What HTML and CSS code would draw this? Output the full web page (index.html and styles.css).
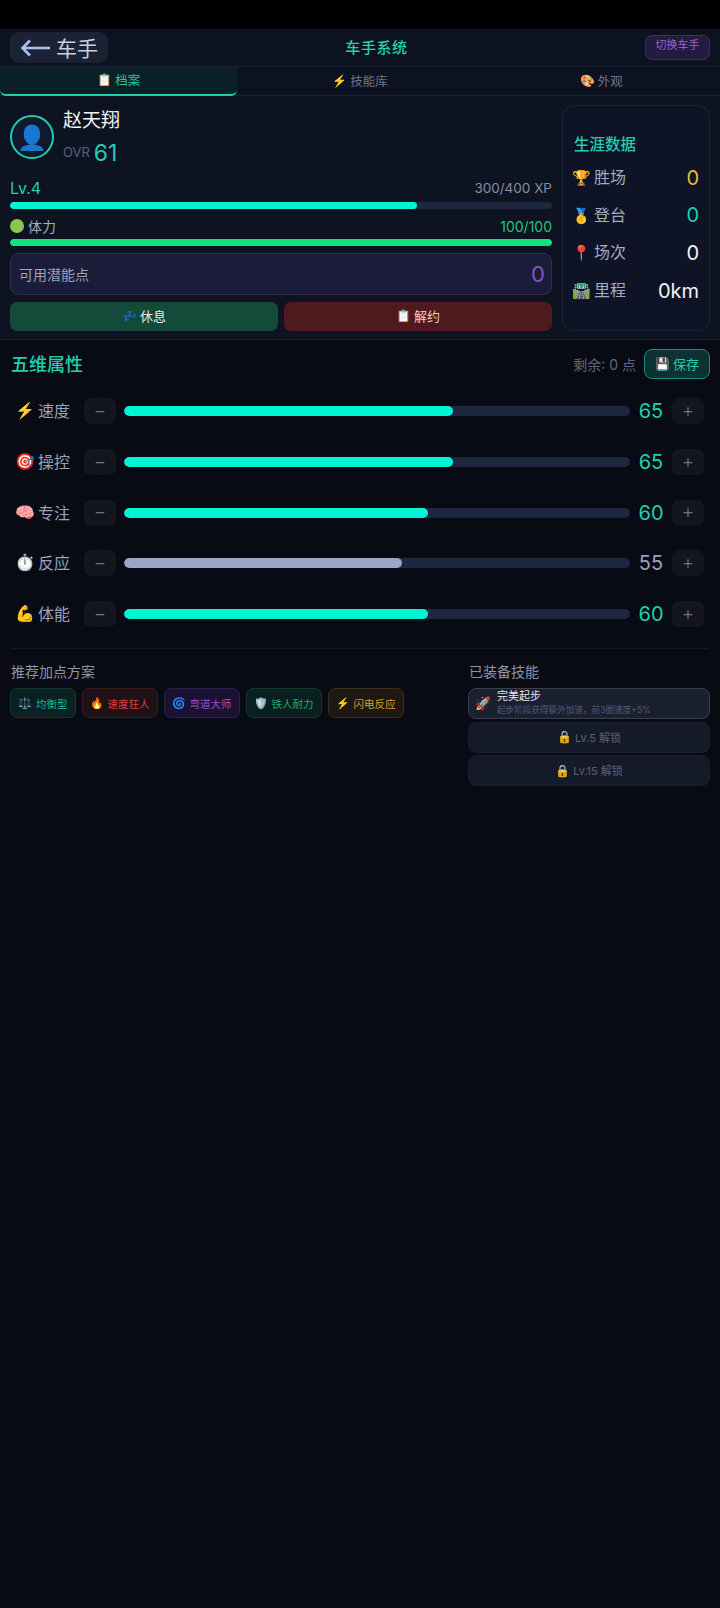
FILE: index.html
```html
<!DOCTYPE html>
<html lang="zh-CN">
<head>
    <meta charset="UTF-8">
    <meta name="viewport" content="width=device-width, initial-scale=1.0">
    <title>车手系统</title>
    <link rel="stylesheet" href="styles.css">
</head>
<body>

    <div class="status-bar"></div>

    <header class="top-bar">
        <div class="back-btn">
            <svg class="back-arrow" viewBox="0 0 30 18"><path d="M30 9H3M10 1.500 2.500 9l7.500 7.500" fill="none" stroke="#a9c3ec" stroke-width="2.600"/></svg>
            <span class="back-text">车手</span>
        </div>
        <div class="page-title">车手系统</div>
        <div class="switch-btn">切换车手</div>
    </header>

    <nav class="tabs">
        <div class="tab active"><span class="emoji">📋</span>档案</div>
        <div class="tab"><span class="emoji">⚡</span>技能库</div>
        <div class="tab"><span class="emoji">🎨</span>外观</div>
    </nav>

    <section class="profile">
        <div class="profile-main">
            <div class="driver">
                <div class="avatar">👤</div>
                <div class="driver-info">
                    <div class="driver-name">赵天翔</div>
                    <div class="ovr"><span class="ovr-label">OVR</span><span class="ovr-value">61</span></div>
                </div>
            </div>

            <div class="meter-head level-head">
                <span class="level">Lv.4</span>
                <span class="xp">300/400 XP</span>
            </div>
            <div class="bar thin"><div class="fill cyan" style="width: 75%"></div></div>

            <div class="meter-head stamina-head">
                <span class="stamina-label"><i class="dot"></i>体力</span>
                <span class="stamina-value">100/100</span>
            </div>
            <div class="bar thin"><div class="fill green" style="width: 100%"></div></div>

            <div class="potential">
                <span>可用潜能点</span>
                <span class="potential-value">0</span>
            </div>

            <div class="actions">
                <div class="action rest"><span class="emoji">💤</span>休息</div>
                <div class="action cancel"><span class="emoji">📋</span>解约</div>
            </div>
        </div>

        <aside class="career">
            <div class="career-title">生涯数据</div>
            <div class="career-row"><span class="emoji-lg">🏆</span><span class="career-label">胜场</span><span class="career-value gold">0</span></div>
            <div class="career-row"><span class="emoji-lg">🥇</span><span class="career-label">登台</span><span class="career-value teal">0</span></div>
            <div class="career-row"><span class="emoji-lg">📍</span><span class="career-label">场次</span><span class="career-value">0</span></div>
            <div class="career-row"><span class="emoji-lg">🛣️</span><span class="career-label">里程</span><span class="career-value">0km</span></div>
        </aside>
    </section>

    <main class="content">
        <div class="attr-head">
            <h2>五维属性</h2>
            <div class="attr-side">
                <span class="remain">剩余: 0 点</span>
                <div class="save-btn"><span class="emoji">💾</span>保存</div>
            </div>
        </div>

        <div class="attr-list">
            <div class="attr-row">
                <div class="attr-name"><span class="emoji-lg">⚡</span>速度</div>
                <div class="step">−</div>
                <div class="bar wide"><div class="fill cyan" style="width: 65%"></div></div>
                <div class="attr-value">65</div>
                <div class="step">+</div>
            </div>
            <div class="attr-row">
                <div class="attr-name"><span class="emoji-lg">🎯</span>操控</div>
                <div class="step">−</div>
                <div class="bar wide"><div class="fill cyan" style="width: 65%"></div></div>
                <div class="attr-value">65</div>
                <div class="step">+</div>
            </div>
            <div class="attr-row">
                <div class="attr-name"><span class="emoji-lg">🧠</span>专注</div>
                <div class="step">−</div>
                <div class="bar wide"><div class="fill cyan" style="width: 60%"></div></div>
                <div class="attr-value">60</div>
                <div class="step">+</div>
            </div>
            <div class="attr-row">
                <div class="attr-name"><span class="emoji-lg">⏱️</span>反应</div>
                <div class="step">−</div>
                <div class="bar wide"><div class="fill grey" style="width: 55%"></div></div>
                <div class="attr-value low">55</div>
                <div class="step">+</div>
            </div>
            <div class="attr-row">
                <div class="attr-name"><span class="emoji-lg">💪</span>体能</div>
                <div class="step">−</div>
                <div class="bar wide"><div class="fill cyan" style="width: 60%"></div></div>
                <div class="attr-value">60</div>
                <div class="step">+</div>
            </div>
        </div>

        <div class="lower">
            <div class="plans">
                <h3>推荐加点方案</h3>
                <div class="chips">
                    <div class="chip teal-chip"><span class="emoji">⚖️</span>均衡型</div>
                    <div class="chip red-chip"><span class="emoji">🔥</span>速度狂人</div>
                    <div class="chip purple-chip"><span class="emoji">🌀</span>弯道大师</div>
                    <div class="chip green-chip"><span class="emoji">🛡️</span>铁人耐力</div>
                    <div class="chip amber-chip"><span class="emoji">⚡</span>闪电反应</div>
                </div>
            </div>
            <div class="skills">
                <h3>已装备技能</h3>
                <div class="skill equipped">
                    <span class="emoji-lg">🚀</span>
                    <div>
                        <div class="skill-name">完美起步</div>
                        <div class="skill-desc">起步阶段获得额外加速，前3圈速度+5%</div>
                    </div>
                </div>
                <div class="skill locked"><span class="emoji">🔒</span>Lv.5 解锁</div>
                <div class="skill locked"><span class="emoji">🔒</span>Lv.15 解锁</div>
            </div>
        </div>
    </main>

</body>
</html>
```

FILE: styles.css
```css
* {
    box-sizing: border-box;
}

body {
    margin: 0;
    height: 1608px;
    overflow: hidden;
    background-color: #080b14;
    color: #fff;
    font-family: "Inter", "Noto Sans CJK SC", sans-serif;
}

.emoji {
    margin-right: 3px;
    font-size: 12px;
    flex: none;
}

.emoji-lg {
    margin-right: 3px;
    font-size: 15px;
    flex: none;
}

.status-bar {
    height: 29px;
    background-color: #000;
}

/* header */
.top-bar {
    height: 38px;
    display: flex;
    align-items: center;
    justify-content: space-between;
    padding: 0 10px;
    background-color: #0d1220;
    border-bottom: 1px solid #1c2338;
}

.back-btn {
    width: 98px;
    height: 31px;
    display: flex;
    align-items: center;
    justify-content: center;
    gap: 6px;
    background-color: #1b2234;
    border-radius: 9px;
    color: #c9cede;
    font-size: 21px;
}

.back-text {
    margin-bottom: 2px;
}

.back-arrow {
    width: 30px;
    height: 18px;
}

.page-title {
    margin-bottom: 2px;
    color: #21d4ae;
    font-size: 15px;
    font-weight: 500;
    letter-spacing: .6px;
}

.switch-btn {
    width: 65px;
    height: 25px;
    padding-top: 1px;
    text-align: center;
    background-color: #241c40;
    border: 1px solid #3c2e62;
    border-radius: 7px;
    color: #9b5fd6;
    font-size: 11px;
    line-height: 16px;
}

/* tabs */
.tabs {
    height: 29px;
    display: grid;
    grid-template-columns: repeat(3, 1fr);
    gap: 4px;
    background-color: #0d1220;
    border-bottom: 1px solid #1c2338;
}

.tab {
    display: flex;
    align-items: center;
    justify-content: center;
    padding-bottom: 2px;
    color: #6d7489;
    font-size: 12.500px;
}

.tab.active {
    height: 29px;
    background-color: #0b1f27;
    border-bottom: 2px solid #1fd0b0;
    border-radius: 0 0 6px 6px;
    color: #1cc8a8;
}

/* profile */
.profile {
    height: 244px;
    display: flex;
    gap: 10px;
    padding: 9px 10px 8px;
    background-color: #0e1322;
    border-bottom: 1px solid #1a2133;
}

.profile-main {
    flex: 1;
    min-width: 0;
}

.driver {
    display: flex;
    align-items: flex-start;
    gap: 9px;
    height: 68px;
}

.avatar {
    width: 44px;
    height: 44px;
    margin-top: 10px;
    display: flex;
    align-items: center;
    justify-content: center;
    border: 2px solid #1fd0b0;
    border-radius: 50%;
    background-color: #111a2c;
    font-size: 24px;
    overflow: hidden;
}

.driver-info {
    padding-top: 2px;
}

.driver-name {
    color: #f2f3f7;
    font-size: 19px;
    line-height: 28px;
}

.ovr {
    display: flex;
    align-items: center;
    gap: 4px;
    height: 32px;
    margin-top: 2px;
}

.ovr-label {
    color: #5a6178;
    font-size: 13px;
    margin-bottom: 3px;
}

.ovr-value {
    color: #1fd0b0;
    font-size: 23px;
}

.meter-head {
    display: flex;
    justify-content: space-between;
    align-items: center;
}

.level-head {
    height: 22px;
    margin-top: 4px;
    margin-bottom: 3px;
}

.stamina-head {
    height: 22px;
    margin-top: 6px;
    margin-bottom: 2px;
}

.level {
    color: #1fd0b0;
    font-size: 16px;
}

.xp {
    color: #858da6;
    font-size: 13.500px;
}

.stamina-label {
    display: flex;
    align-items: center;
    color: #a4abc0;
    font-size: 14px;
}

.dot {
    width: 14px;
    height: 14px;
    margin-right: 4px;
    border-radius: 50%;
    background-color: #8ec550;
}

.stamina-value {
    color: #1fc775;
    font-size: 14px;
}

.bar {
    background-color: #1e2740;
    overflow: hidden;
}

.bar.thin {
    height: 7px;
    border-radius: 4px;
}

.bar.wide {
    flex: 1;
    height: 10px;
    border-radius: 5px;
}

.fill {
    height: 100%;
    border-radius: 5px;
}

.fill.cyan {
    background-color: #00f5d4;
}

.fill.green {
    background-color: #0de580;
}

.fill.grey {
    background-color: #9ba6c9;
}

.potential {
    height: 42px;
    margin-top: 7px;
    padding: 0 6px 0 8px;
    display: flex;
    align-items: center;
    justify-content: space-between;
    background-color: #1a1c3a;
    border: 1px solid #2f2c55;
    border-radius: 8px;
    color: #9aa1ba;
    font-size: 14px;
}

.potential-value {
    color: #8452c8;
    font-size: 22px;
}

.actions {
    display: flex;
    gap: 6px;
    margin-top: 7px;
}

.action {
    flex: 1;
    height: 29px;
    display: flex;
    align-items: center;
    justify-content: center;
    padding-bottom: 2px;
    border-radius: 7px;
    font-size: 13px;
}

.action.rest {
    background-color: #144a3a;
    color: #e4ece9;
}

.action.cancel {
    background-color: #4f1a1d;
    color: #eccfcf;
}

.career {
    width: 148px;
    padding: 26px 10px 0 10px;
    border: 1px solid #1c2338;
    border-radius: 12px;
    background-color: #0e1426;
}

.career-title {
    margin-bottom: 5px;
    margin-left: 1px;
    color: #1fd0b0;
    font-size: 15.500px;
    font-weight: 500;
}

.career-row {
    height: 37.600px;
    display: flex;
    align-items: center;
    margin-left: -1px;
}

.career-label {
    margin-bottom: 3px;
    color: #a4abc0;
    font-size: 16px;
}

.career-value {
    margin-left: auto;
    color: #f2f3f7;
    font-size: 20px;
}

.career-value.gold {
    color: #e8bc35;
}

.career-value.teal {
    color: #1fd0b0;
}

/* attributes */
.content {
    padding: 8px 10px 0;
}

.attr-head {
    height: 31px;
    display: flex;
    align-items: center;
    justify-content: space-between;
    margin-left: 1px;
}

h2 {
    margin: 0 0 2px;
    color: #1fd0b0;
    font-size: 18px;
    font-weight: 500;
}

.attr-side {
    display: flex;
    align-items: center;
    gap: 8px;
}

.remain {
    color: #5f667c;
    font-size: 14px;
}

.save-btn {
    width: 66px;
    height: 30px;
    display: flex;
    align-items: center;
    justify-content: center;
    padding-bottom: 1px;
    background-color: #0c3233;
    border: 1px solid #1a8c78;
    border-radius: 8px;
    color: #1fd0b0;
    font-size: 13px;
}

.attr-list {
    margin-top: 7px;
}

.attr-row {
    height: 50.700px;
    display: flex;
    align-items: center;
    padding-left: 5px;
    padding-right: 6px;
}

.attr-name {
    width: 69px;
    display: flex;
    align-items: center;
    padding-bottom: 2px;
    color: #9aa1ba;
    font-size: 16px;
}

.attr-name .emoji-lg {
    font-size: 16px;
}

.step {
    width: 32px;
    height: 26px;
    display: flex;
    align-items: center;
    justify-content: center;
    padding-bottom: 2px;
    background-color: #13161f;
    border-radius: 7px;
    color: #6d7489;
    font-size: 19px;
    font-weight: 300;
}

.attr-row .bar {
    margin-left: 8px;
}

.attr-value {
    width: 42px;
    text-align: center;
    color: #1fd0b0;
    font-size: 20px;
}

.attr-value.low {
    color: #9aa1ba;
}

/* plans and skills */
.lower {
    display: flex;
    justify-content: space-between;
    margin-top: 9px;
    padding-top: 13px;
    border-top: 1px solid #151a26;
}

h3 {
    margin: 0 0 6px 1px;
    color: #8d94aa;
    font-size: 14px;
    font-weight: 400;
    line-height: 20px;
}

.chips {
    display: flex;
    gap: 6px;
}

.chip {
    height: 30px;
    padding: 0 7px;
    display: flex;
    align-items: center;
    border: 1px solid;
    border-radius: 7px;
    font-size: 10.500px;
    white-space: nowrap;
}

.chip .emoji {
    margin-right: 4px;
    font-size: 11px;
}

.teal-chip {
    color: #14b89a;
    background-color: #0a2023;
    border-color: #0f3a38;
}

.red-chip {
    color: #d8423f;
    background-color: #1f1116;
    border-color: #3a181c;
}

.purple-chip {
    color: #9a4fd6;
    background-color: #1a1230;
    border-color: #2c1f4c;
}

.green-chip {
    color: #17ae62;
    background-color: #0a2020;
    border-color: #0f3a30;
}

.amber-chip {
    color: #d99e26;
    background-color: #1d1912;
    border-color: #3a3018;
}

.skills {
    width: 242px;
}

.skill {
    height: 31px;
    margin-bottom: 2.500px;
    display: flex;
    align-items: center;
    justify-content: center;
    padding-bottom: 1px;
    background-color: #151a28;
    border: 1px solid #191f2e;
    border-radius: 8px;
    color: #5a6178;
    font-size: 11px;
}

.skill.equipped {
    justify-content: flex-start;
    padding-left: 6px;
    background-color: #1b2030;
    border-color: #3a3f50;
}

.skill.equipped .emoji-lg {
    margin-right: 6px;
    font-size: 13px;
}

.skill-name {
    color: #e6e8ef;
    font-size: 11px;
    line-height: 13px;
}

.skill-desc {
    color: #525a70;
    font-size: 8.600px;
    line-height: 14px;
    white-space: nowrap;
}
```
